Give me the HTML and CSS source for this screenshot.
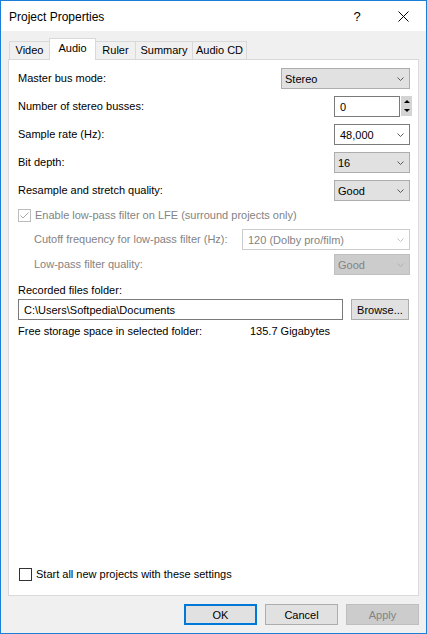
FILE: index.html
```html
<!DOCTYPE html>
<html>
<head>
<meta charset="utf-8">
<title>Project Properties</title>
<link rel="stylesheet" href="styles.css">
</head>
<body>
<div class="window">
  <div class="titlebar">
    <span class="title">Project Properties</span>
    <span class="cap help">?</span>
    <span class="cap close"><svg width="11" height="11" viewBox="0 0 11 11"><path d="M0.5 0.5 L10.5 10.5 M10.5 0.5 L0.5 10.5" stroke="#000" stroke-width="1" fill="none"/></svg></span>
  </div>
  <div class="body">
    <div class="tabs">
      <div class="tab t-video">Video</div>
      <div class="tab active t-audio">Audio</div>
      <div class="tab t-ruler">Ruler</div>
      <div class="tab t-summary">Summary</div>
      <div class="tab t-cd">Audio CD</div>
    </div>
    <div class="panel">
      <div class="row r1">
        <span class="label">Master bus mode:</span>
        <div class="combo w-stereo"><span>Stereo</span><svg class="chev" width="7" height="4" viewBox="0 0 7 4"><path d="M0.5 0.5 L3.5 3.5 L6.5 0.5" fill="none" stroke="#5a5a5a"/></svg></div>
      </div>
      <div class="row r2">
        <span class="label">Number of stereo busses:</span>
        <div class="spin">
          <div class="spin-input">0</div>
          <div class="spin-btns"><span class="up"></span><span class="down"></span></div>
        </div>
      </div>
      <div class="row r2">
        <span class="label">Sample rate (Hz):</span>
        <div class="combo edit w-small"><span>48,000</span><svg class="chev" width="7" height="4" viewBox="0 0 7 4"><path d="M0.5 0.5 L3.5 3.5 L6.5 0.5" fill="none" stroke="#5a5a5a"/></svg></div>
      </div>
      <div class="row r2">
        <span class="label">Bit depth:</span>
        <div class="combo w-small"><span>16</span><svg class="chev" width="7" height="4" viewBox="0 0 7 4"><path d="M0.5 0.5 L3.5 3.5 L6.5 0.5" fill="none" stroke="#5a5a5a"/></svg></div>
      </div>
      <div class="row r2">
        <span class="label">Resample and stretch quality:</span>
        <div class="combo w-small"><span>Good</span><svg class="chev" width="7" height="4" viewBox="0 0 7 4"><path d="M0.5 0.5 L3.5 3.5 L6.5 0.5" fill="none" stroke="#5a5a5a"/></svg></div>
      </div>
      <div class="check-row r-enable disabled">
        <span class="cb cb-dis"><svg width="11" height="11" viewBox="0 0 11 11"><path d="M1.5 5.5 L4 8 L9.5 2.5" fill="none" stroke="#a9a9a9" stroke-width="1"/></svg></span>
        <span>Enable low-pass filter on LFE (surround projects only)</span>
      </div>
      <div class="row r-cutoff disabled">
        <span class="label indent">Cutoff frequency for low-pass filter (Hz):</span>
        <div class="combo dis-edit w-cutoff"><span>120 (Dolby pro/film)</span><svg class="chev" width="7" height="4" viewBox="0 0 7 4"><path d="M0.5 0.5 L3.5 3.5 L6.5 0.5" fill="none" stroke="#c4c4c4"/></svg></div>
      </div>
      <div class="row r-lowpass disabled">
        <span class="label indent">Low-pass filter quality:</span>
        <div class="combo dis w-small"><span>Good</span><svg class="chev" width="7" height="4" viewBox="0 0 7 4"><path d="M0.5 0.5 L3.5 3.5 L6.5 0.5" fill="none" stroke="#b0b0b0"/></svg></div>
      </div>
      <div class="label-row r-rec">Recorded files folder:</div>
      <div class="row r-field">
        <div class="textbox">C:\Users\Softpedia\Documents</div>
        <div class="button browse">Browse...</div>
      </div>
      <div class="storage-row">
        <span class="storage-label">Free storage space in selected folder:</span>
        <span>135.7 Gigabytes</span>
      </div>
      <div class="check-row r-start">
        <span class="cb"></span>
        <span>Start all new projects with these settings</span>
      </div>
    </div>
    <div class="buttons">
      <div class="button dlg default">OK</div>
      <div class="button dlg">Cancel</div>
      <div class="button dlg dis-btn">Apply</div>
    </div>
  </div>
</div>
</body>
</html>
```
FILE: styles.css
```css
html, body {
  margin: 0;
  padding: 0;
}
body {
  font-family: "Liberation Sans", Arial, sans-serif;
  font-size: 11px;
  color: #000;
  background: #fff;
}
.window {
  width: 427px;
  height: 634px;
  box-sizing: border-box;
  border: 1px solid #1c7fd7;
  background: #f0f0f0;
  display: flex;
  flex-direction: column;
}
.titlebar {
  height: 30px;
  flex: none;
  background: #fff;
  display: flex;
  align-items: center;
}
.title {
  flex: 1;
  margin-left: 8px;
  font-size: 12px;
  margin-top: 1px;
}
.cap {
  width: 46px;
  height: 30px;
  display: flex;
  align-items: center;
  justify-content: center;
}
.help {
  font-size: 13px;
  margin-top: 1px;
}
.body {
  flex: 1;
  display: flex;
  flex-direction: column;
  padding-top: 7px;
}
.tabs {
  height: 21px;
  display: flex;
  align-items: flex-end;
  margin-left: 8px;
  flex: none;
}
.tab {
  box-sizing: border-box;
  height: 18px;
  border: 1px solid #d9d9d9;
  border-bottom: none;
  background: #f0f0f0;
  display: flex;
  align-items: center;
  justify-content: center;
  margin-left: -1px;
  padding-bottom: 1px;
}
.t-video { width: 41px; margin-left: 0; }
.t-audio { width: 47px; }
.t-ruler { width: 41px; }
.t-summary { width: 58px; }
.t-cd { width: 55px; }
.tab.active {
  height: 22px;
  margin-bottom: -1px;
  background: #fff;
  position: relative;
  z-index: 1;
  padding-bottom: 4px;
}
.panel {
  flex: none;
  height: 537px;
  box-sizing: border-box;
  margin: 0 7px;
  background: #fff;
  border: 1px solid #d9d9d9;
  padding: 8px 8px 13px 9px;
  display: flex;
  flex-direction: column;
}
.row {
  display: flex;
  align-items: center;
  justify-content: space-between;
  height: 21px;
  flex: none;
}
.r2 { margin-top: 7px; }
.label { line-height: 15px; }
.indent { padding-left: 16px; }
.disabled { color: #838383; }
.combo {
  box-sizing: border-box;
  height: 21px;
  border: 1px solid #adadad;
  background: #e1e1e1;
  display: flex;
  align-items: center;
  justify-content: space-between;
  padding: 0 5px 0 3px;
}
.combo.edit {
  background: #fff;
  border-color: #7a7a7a;
  padding-left: 5px;
}
.combo.dis-edit {
  background: #fff;
  border-color: #cccccc;
  padding-left: 5px;
}
.combo.dis {
  background: #cccccc;
  border-color: #bfbfbf;
}
.w-stereo { width: 129px; }
.w-small { width: 76px; }
.w-cutoff { width: 168px; }
.chev { flex: none; }
.spin {
  display: flex;
  gap: 1px;
  margin-right: -2px;
}
.spin-input {
  box-sizing: border-box;
  width: 66px;
  height: 21px;
  border: 1px solid #7a7a7a;
  background: #fff;
  padding-left: 5px;
  display: flex;
  align-items: center;
}
.spin-btns {
  width: 11px;
  height: 20px;
  background: #d4d4d4;
  display: flex;
  flex-direction: column;
  align-items: center;
  justify-content: space-between;
  padding: 4px 0;
  box-sizing: border-box;
}
.spin-btns .up {
  width: 0;
  height: 0;
  border-left: 3px solid transparent;
  border-right: 3px solid transparent;
  border-bottom: 3px solid #000;
}
.spin-btns .down {
  width: 0;
  height: 0;
  border-left: 3px solid transparent;
  border-right: 3px solid transparent;
  border-top: 3px solid #000;
}
.check-row {
  display: flex;
  align-items: center;
  height: 15px;
  line-height: 15px;
  flex: none;
}
.r-enable { margin-top: 7px; }
.r-cutoff { margin-top: 6px; }
.r-lowpass { margin-top: 4px; }
.cb {
  box-sizing: border-box;
  width: 13px;
  height: 13px;
  border: 1px solid #333;
  background: #fff;
  margin-right: 4px;
  flex: none;
  display: flex;
}
.cb-dis { border-color: #bcbcbc; }
.label-row {
  height: 15px;
  line-height: 15px;
  margin-top: 8px;
  flex: none;
}
.r-field { margin-top: 1px; }
.textbox {
  box-sizing: border-box;
  width: 325px;
  height: 21px;
  border: 1px solid #7a7a7a;
  padding-left: 5px;
  display: flex;
  align-items: center;
}
.button {
  box-sizing: border-box;
  height: 21px;
  border: 1px solid #adadad;
  background: #e1e1e1;
  display: flex;
  align-items: center;
  justify-content: center;
}
.browse {
  width: 58px;
  margin-right: 1px;
}
.storage-row {
  display: grid;
  grid-template-columns: 232px auto;
  height: 15px;
  line-height: 15px;
  margin-top: 4px;
  flex: none;
}
.r-start {
  margin-top: auto;
  padding-left: 1px;
}
.buttons {
  display: flex;
  justify-content: flex-end;
  gap: 8px;
  margin: 8px 7px 0 0;
  flex: none;
}
.dlg { width: 73px; }
.default {
  border: 2px solid #0078d7;
}
.dis-btn {
  background: #cccccc;
  border-color: #bfbfbf;
  color: #838383;
}
```
